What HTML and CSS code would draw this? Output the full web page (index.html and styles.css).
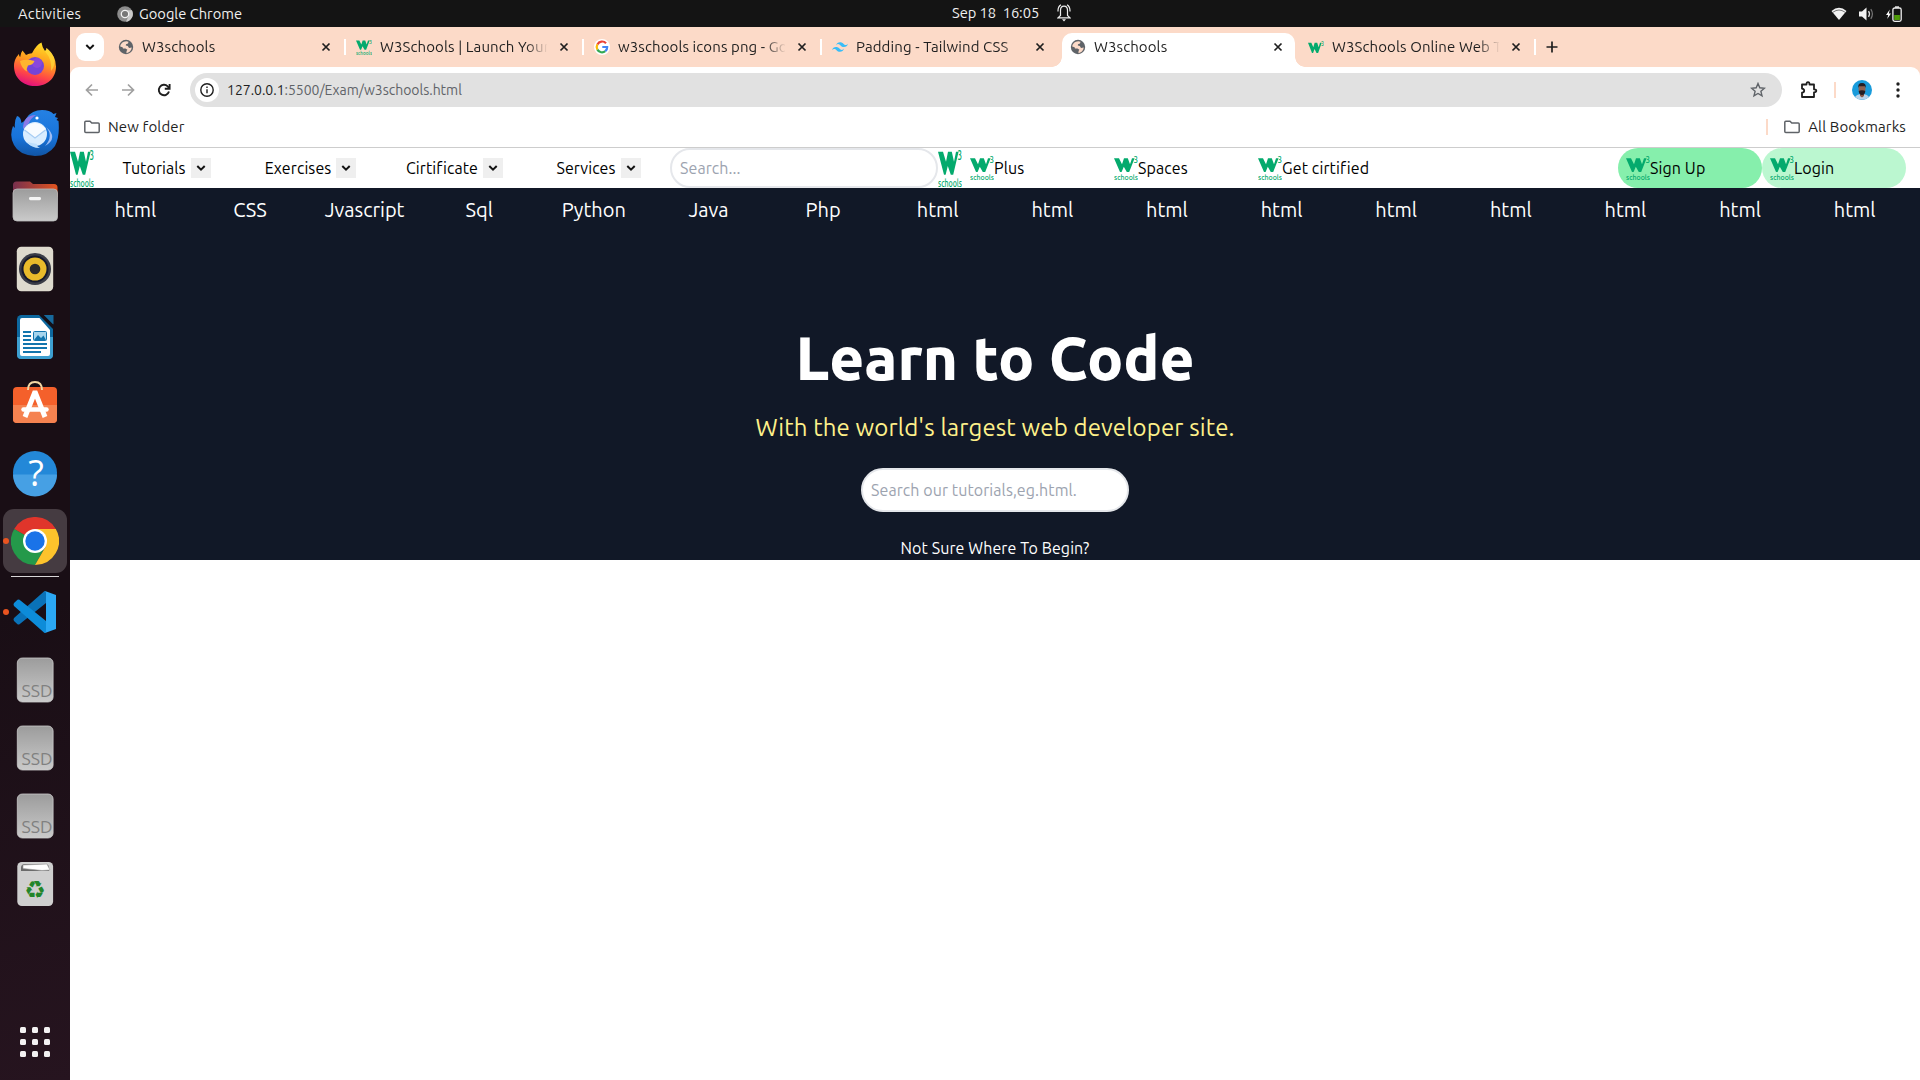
FILE: index.html
```html
<!DOCTYPE html>
<html lang="en">
<head>
<meta charset="utf-8">
<title>W3schools</title>
<link rel="stylesheet" href="styles.css">
</head>
<body>
<svg class="defs" width="0" height="0">
  <symbol id="w3" viewBox="0 0 24 24" preserveAspectRatio="none">
    <path fill="#04aa6d" d="M0 2.200h5l3 6 2-6h3.800l2.200 6 2-6h2.600L15.200 16h-2.400L9.800 10.800 7.600 16H6z"/>
    <text x="19.400" y="7" font-size="9" font-weight="500" textLength="4.500" lengthAdjust="spacingAndGlyphs" fill="#04aa6d">3</text>
    <text x="0" y="23.600" font-size="7" font-weight="500" textLength="24" lengthAdjust="spacingAndGlyphs" fill="#04aa6d">schools</text>
  </symbol>
  <symbol id="w3small" viewBox="0 0 24 16" preserveAspectRatio="none">
    <path fill="#04aa6d" d="M0 2.200h5l3 6 2-6h3.800l2.200 6 2-6h2.600L15.200 16h-2.400L9.800 10.800 7.600 16H6z"/>
    <text x="19.400" y="7" font-size="9" font-weight="500" textLength="4.500" lengthAdjust="spacingAndGlyphs" fill="#04aa6d">3</text>
  </symbol>
  <symbol id="globe" viewBox="0 0 16 16">
    <circle cx="8" cy="8" r="7.200" fill="#5f6368"/>
    <path class="land" d="M8.200 2.200 10.500 2.800 10 4.600 8 5.200 7.800 6.500 9.800 7 11 9 13.800 8.600C13.400 12 11 14 8.400 14.200L8.600 12 9.400 10.800 7.500 9.600 5 9.500 4.600 8.200 2.200 7.600C2.400 4.600 5 2.300 8.200 2.200z"/>
  </symbol>
  <symbol id="close" viewBox="0 0 10 10"><path d="M1.500 1.500l7 7m0-7l-7 7" stroke="#1f1f1f" stroke-width="1.700"/></symbol>
  <symbol id="down" viewBox="0 0 10 8"><path d="M1.300 2l3.700 3.600L8.700 2" fill="none" stroke="#111" stroke-width="2"/></symbol>
  <symbol id="folder" viewBox="0 0 16 14"><path d="M.8 2.200Q.8 1.200 1.800 1.200H6l1.800 1.800h6.400q1 0 1 1v7.600q0 1-1 1H1.800q-1 0-1-1z" fill="none" stroke="#5f6368" stroke-width="1.500"/></symbol>
  <symbol id="ssd" viewBox="0 0 48 48">
    <rect x="6.300" y="2" width="35.800" height="44" rx="5" fill="url(#grey)" stroke="#ccc" stroke-width=".8"/>
    <text x="10.500" y="41" font-size="17" textLength="31" lengthAdjust="spacingAndGlyphs" fill="#808080">SSD</text>
  </symbol>
  <linearGradient id="grey" x2="0" y2="1"><stop stop-color="#9c9c9c"/><stop offset="1" stop-color="#cacaca"/></linearGradient>
  <linearGradient id="fire" x1=".7" y1="0" x2=".4" y2="1"><stop stop-color="#ffe226"/><stop offset=".45" stop-color="#ff9a1f"/><stop offset=".75" stop-color="#ff4747"/><stop offset="1" stop-color="#e2117d"/></linearGradient>
  <linearGradient id="bird" x2="0" y2="1"><stop stop-color="#2581e3"/><stop offset=".6" stop-color="#1773da"/><stop offset="1" stop-color="#1155a5"/></linearGradient>
  <linearGradient id="files" x2="1" y2="0"><stop stop-color="#77304e"/><stop offset="1" stop-color="#e2541f"/></linearGradient>
</svg>

<header class="topbar">
  <div class="top-left">
    <span class="activities">Activities</span>
    <svg width="16" height="16" viewBox="0 0 16 16"><circle cx="8" cy="8" r="7.800" fill="#8c8c8c"/><path d="M8 4.200h7a8 8 0 0 1-6 11.600l2.500-5.500z" fill="#c9c9c9"/><circle cx="8" cy="8" r="3.700" fill="#777" stroke="#f2f2f2" stroke-width="1.300"/></svg>
    <span class="appname">Google Chrome</span>
  </div>
  <div class="clock">
    <span>Sep 18&nbsp; 16:05</span>
    <svg width="14" height="18" viewBox="0 0 14 18" fill="none" stroke="#eee" stroke-width="1.200"><path d="M3.500 11.500V6.500Q3.500 2.200 7 2.200t3.500 4.300v5l2.500 2.300H1zM1 7.500Q.8 2.600 4 .8M13 7.500Q13.200 2.600 10 .8"/><path d="M5 15.200h4L7 17.400z" fill="#eee" stroke="none"/></svg>
  </div>
  <div class="tray">
    <svg width="16" height="14" viewBox="0 0 16 14"><path d="M.5 4Q8-2.500 15.500 4L8 13z" fill="#f2f2f2"/><path d="M2 5.200Q8 .8 14 5.200" fill="none" stroke="#777" stroke-width="1"/></svg>
    <svg width="15" height="14" viewBox="0 0 15 14"><path d="M0 4.500h3L7.500.5v13L3 9.500H0z" fill="#f2f2f2"/><path d="M9.500 4.200q2 2.800 0 5.600" fill="none" stroke="#ddd" stroke-width="1.300"/><path d="M11.800 2.200q3.200 4.800 0 9.600" fill="none" stroke="#777" stroke-width="1.200"/></svg>
    <svg width="16" height="16" viewBox="0 0 16 16"><path d="M3.800 3.500 0 9h2.200L1.200 13 5 7.500H2.800z" fill="#fff"/><rect x="6.900" y="2" width="8.300" height="13.300" rx="1.800" fill="#141414" stroke="#eee" stroke-width="1.300"/><path d="M9 .3h4v1.500H9z" fill="#eee"/><path d="M8.200 9h5.700v5H8.200z" fill="#4e9a06"/></svg>
  </div>
</header>

<div class="desktop">
<aside class="dock">
  <div class="app"><svg viewBox="0 0 48 48">
    <path fill="url(#fire)" d="M11.500 9.500Q13.500 12 15 14q3-1.500 6-1.800Q25 4 30.500 1.500q.5 5 3.500 8.500 1.500-.5 1.500-3Q45 15 45 25.500C45 37.500 36 45 24 45S3 37 3 25c0-6 3-10 5-12 0 1.500.5 2.500 1.200 3Q9.500 12 11.500 9.500z"/>
    <circle cx="24" cy="25" r="9" fill="#7544d8"/><circle cx="26" cy="22" r="5" fill="#a04be0" opacity=".5"/>
    <path fill="#ffb52e" d="M9 20q6-2.500 14.500 0Q22 24 17 24.500q-2 3.500-1 6Q10 27 9 20z"/>
    <path fill="#ffdc3c" opacity=".7" d="M30.500 1.500Q31 7 36 13t4 17q5-6 3-13-2-6-7.500-10 0 2.500-1.500 3-3-3-3.500-8.500z"/>
  </svg></div>
  <div class="app"><svg viewBox="0 0 48 48">
    <path fill="url(#bird)" d="M6 7Q10 8 10.500 14q3-1.500 5-5Q21 1 31 1q8 0 11.500 4l3-1-1.500 4 3 1-1.500 2 2 1Q49 27 44 37 37 47 24 47 8 46 3 36-2 27 2 17l2 2Q3 12 6 7z"/>
    <path fill="#8a7ae8" d="M12 20Q12 6 25 6q-6 4-7 8z"/><circle cx="26" cy="9" r="1.600" fill="#fff"/>
    <path fill="#9dbcf3" d="M35 18q8 9-1 19 14-8 1-19z"/>
    <circle cx="24" cy="25" r="12" fill="#d9edff"/><path fill="#f7fbff" d="M13 20q11-12 22 0L24 29z"/><path d="M13.500 21 24 29l10.500-8" fill="none" stroke="#a7cdf3" stroke-width="1.200"/><path fill="#bfe0fd" d="M16 33q4 6 13 6-4-2-3-4z"/>
  </svg></div>
  <div class="app"><svg viewBox="0 0 48 48">
    <path fill="url(#files)" d="M2 14V8q0-3.500 3.500-3.500H19L22 7h21q3.500 0 3.500 3.500V20H2z"/>
    <rect x="2" y="12" width="44.500" height="32" rx="4" fill="url(#grey)" stroke="#bbb" stroke-width=".8"/><rect x="18" y="20" width="12" height="3.200" rx="1.400" fill="#f5f5f5"/>
  </svg></div>
  <div class="app"><svg viewBox="0 0 48 48">
    <rect x="5.800" y="1.800" width="36.400" height="44.400" rx="4.500" fill="#dedace"/><circle cx="24" cy="24" r="16" fill="#3a3c46"/><circle cx="24" cy="24" r="13.500" fill="#171a2c"/><circle cx="24" cy="24" r="11.500" fill="#e9bb2b"/><circle cx="24" cy="24" r="5.300" fill="#2b2b2b"/>
  </svg></div>
  <div class="app"><svg viewBox="0 0 48 48">
    <rect x="6" y="2" width="36" height="44" rx="4.500" fill="#0d689f"/><path fill="#3d9fd0" d="M6 24h36v18q0 4-4 4H10q-4 0-4-4z"/>
    <path fill="#fff" d="M11 5h17.500L39 17v24q0 2-2 2H11q-2 0-2-2V7q0-2 2-2z"/><path fill="#141018" d="M28 2h5l10 10v5z"/><path fill="#17699c" d="M33 2h9.500v9.500z"/>
    <path stroke="#1375ad" stroke-width="2" d="M12 19h8M12 23h8M12 27h8M12 31h24M12 35h24M12 39h18"/><rect x="22.500" y="18.500" width="13" height="9" rx="1" fill="#a7d5ed" stroke="#1375ad"/><path fill="#1375ad" d="m23 27 4-5 3 3 2.500-2.500L35 27z"/>
  </svg></div>
  <div class="app"><svg viewBox="0 0 48 48">
    <rect x="2" y="6" width="44" height="36" rx="4" fill="#f4602b"/><path fill="#f58250" d="M2 24h44v14q0 4-4 4H6q-4 0-4-4z"/>
    <path fill="none" stroke="#f4d8a4" stroke-width="1.900" d="M17 9Q17 1 24 1t7 8"/>
    <path fill="none" stroke="#fff" stroke-width="5" d="m14 36 9.500-24h1L34 36"/><path stroke="#fff" stroke-width="4.500" stroke-linecap="round" d="M12.500 28.500h23"/>
  </svg></div>
  <div class="app"><svg viewBox="0 0 48 48">
    <circle cx="24" cy="24" r="22" fill="#2388d8"/><path fill="#46a0e4" d="M2 25.500h44a22 22 0 0 1-44 0z"/>
    <text class="help" x="25" y="36.500" text-anchor="middle" font-size="36" fill="#fff">?</text>
  </svg></div>
  <div class="app active running"><svg viewBox="0 0 48 48">
    <path fill="#e0352b" d="M24 24 3.200 12a24 24 0 0 1 41.600 0z"/><path fill="#24994a" d="M24 24 3.200 12A24 24 0 0 0 24 48l10-18z"/><path fill="#fdc32c" d="M24 12h20.800A24 24 0 0 1 24 48l10.400-18z"/>
    <circle cx="24" cy="24" r="12" fill="#fff"/><circle cx="24" cy="24" r="9.700" fill="#1a73e8"/>
  </svg></div>
  <div class="divider"></div>
  <div class="app running"><svg viewBox="0 0 48 48">
    <path fill="#0a72b8" d="m3 33 3.500 3.200q1 .8 2 0L35 15V3.500L33.500 3 3 30q-1 1.500 0 3z"/><path fill="#0d8cd9" d="m3 15 3.500-3.200q1-.8 2 0L35 33v11.500l-1.500.5L3 18q-1-1.500 0-3z"/>
    <path fill="#2ba8f4" d="M34 3 45 7v34l-11 4q1-1 1-2V5q0-1-1-2z"/>
  </svg></div>
  <div class="app"><svg><use href="#ssd"/></svg></div>
  <div class="app"><svg><use href="#ssd"/></svg></div>
  <div class="app"><svg><use href="#ssd"/></svg></div>
  <div class="app"><svg viewBox="0 0 48 48">
    <rect x="6.300" y="2" width="35.800" height="44" rx="4.500" fill="#cfcfcf"/><path fill="#6b6b6b" d="M10 11V8q0-4 4-4h20q4 0 4 4v3z"/><path fill="#fff" stroke="#999" stroke-width=".6" d="m12 5 24-1 3 6-8 .5-19-2z"/>
    <text class="recycle" x="24" y="38" text-anchor="middle" font-size="24" fill="#23852a">♻</text>
  </svg></div>
  <div class="grid-button"><i></i><i></i><i></i><i></i><i></i><i></i><i></i><i></i><i></i></div>
</aside>

<main class="browser">
  <div class="tabs">
    <div class="tab-search"><svg width="10" height="8"><use href="#down"/></svg></div>
    <div class="tab"><svg class="fav"><use href="#globe"/></svg><span class="tab-title">W3schools</span><svg class="x"><use href="#close"/></svg></div>
    <div class="tab sep"><svg class="fav"><use href="#w3"/></svg><span class="tab-title">W3Schools | Launch Your own</span><svg class="x"><use href="#close"/></svg></div>
    <div class="tab sep"><svg class="fav" viewBox="0 0 16 16"><circle cx="8" cy="8" r="8" fill="#fff"/><g fill="none" stroke-width="2.200"><path stroke="#ea4335" d="M12 4.200A5.300 5.300 0 0 0 3.400 5.400"/><path stroke="#fbbc05" d="M3.400 5.400a5.300 5.300 0 0 0 0 5.200"/><path stroke="#34a853" d="M3.400 10.600a5.300 5.300 0 0 0 7.900 1.600"/><path stroke="#4285f4" d="M11.300 12.200Q13.300 10.500 13.200 8H8.300"/></g></svg><span class="tab-title">w3schools icons png - Google</span><svg class="x"><use href="#close"/></svg></div>
    <div class="tab sep"><svg class="fav" viewBox="0 0 16 16"><path fill="#38bdf8" d="M4 6.400Q5 3.200 8 3.200c3.200 0 3.600 2.400 5.200 2.800Q14.800 6.400 16 4.800 15 8 12 8C8.800 8 8.400 5.600 6.800 5.200Q5.200 4.800 4 6.400zM0 11.200Q1 8 4 8c3.200 0 3.600 2.400 5.200 2.800q1.600.4 2.800-1.200-1 3.200-4 3.200c-3.200 0-3.600-2.400-5.200-2.800Q1.200 9.600 0 11.200z"/></svg><span class="tab-title">Padding - Tailwind CSS</span><svg class="x"><use href="#close"/></svg></div>
    <div class="tab current"><svg class="fav"><use href="#globe"/></svg><span class="tab-title">W3schools</span><svg class="x"><use href="#close"/></svg></div>
    <div class="tab"><svg class="fav short"><use href="#w3small"/></svg><span class="tab-title">W3Schools Online Web Tutorials</span><svg class="x"><use href="#close"/></svg></div>
    <div class="new-tab"><svg width="12" height="12"><path d="M6 .5v11M.5 6h11" stroke="#1f1f1f" stroke-width="1.700"/></svg></div>
  </div>

  <div class="toolbar">
    <svg class="tool" viewBox="0 0 16 16" fill="none" stroke="#a0a0a0" stroke-width="1.700"><path d="M14 8H3M8 2.500 2.500 8 8 13.500"/></svg>
    <svg class="tool" viewBox="0 0 16 16" fill="none" stroke="#a0a0a0" stroke-width="1.700"><path d="M2 8h11M8 2.500 13.500 8 8 13.500"/></svg>
    <svg class="tool" viewBox="0 0 16 16" fill="none" stroke="#1f1f1f" stroke-width="1.900"><path d="M13 9.500A5.200 5.200 0 1 1 11.700 4.300l1.300 1.600"/><path d="M13.600 2v4.800H8.800"/></svg>
    <div class="address">
      <span class="info"><svg width="14" height="14" fill="none" stroke="#1f1f1f" stroke-width="1.400"><circle cx="7" cy="7" r="6.200"/><path d="M7 6.300v4M7 3.600v1.400"/></svg></span>
      <span class="url"><b>127.0.0.1</b>:5500/Exam/w3schools.html</span>
      <svg class="star" viewBox="0 0 16 16"><path d="m8 1.500 1.800 4.300 4.700.4-3.600 3.100 1.100 4.600L8 11.500l-4 2.400 1.100-4.600-3.600-3.100 4.700-.4z" fill="none" stroke="#5f6368" stroke-width="1.400"/></svg>
    </div>
    <svg class="ext" viewBox="0 0 18 18"><path d="M2 3.500h4.500Q6.500 1.200 8 1.200t1.500 2.300H14v4.800q2.300 0 2.300 1.500T14 11.300V16H2v-4.300q2.200-.3 2.200-2T2 7.700z" fill="none" stroke="#1f1f1f" stroke-width="1.800" stroke-linejoin="round"/></svg>
    <span class="bar"></span>
    <svg class="avatar" viewBox="0 0 20 20"><circle cx="10" cy="10" r="10" fill="#199bdb"/><path d="M3 17q2-3 7-3t7 3a10 10 0 0 1-14 0z" fill="#b8d3ea"/><path d="M8 12h4v4l-2 1.500L8 16z" fill="#875846"/><ellipse cx="10" cy="9" rx="3.500" ry="5" fill="#8f6251"/><path d="M6.300 8Q5.600 3 10 3t3.700 5l-.8-1.800H7.100zM6.700 11q1-.8 3.300-.8t3.300.8Q13 15 10 15t-3.300-4z" fill="#251e24"/></svg>
    <svg class="dots" viewBox="0 0 4 16" fill="#1f1f1f"><circle cx="2" cy="2" r="1.700"/><circle cx="2" cy="8" r="1.700"/><circle cx="2" cy="14" r="1.700"/></svg>
  </div>

  <div class="bookmarks">
    <svg width="16" height="14"><use href="#folder"/></svg><span>New folder</span>
    <i class="bar end"></i>
    <svg width="16" height="14"><use href="#folder"/></svg><span>All Bookmarks</span>
  </div>

  <section class="page">
    <nav class="main-nav">
      <svg class="logo"><use href="#w3"/></svg>
      <div class="menu">Tutorials <span class="caret"><svg width="10" height="8"><use href="#down"/></svg></span></div>
      <div class="menu">Exercises <span class="caret"><svg width="10" height="8"><use href="#down"/></svg></span></div>
      <div class="menu">Cirtificate <span class="caret"><svg width="10" height="8"><use href="#down"/></svg></span></div>
      <div class="menu">Services <span class="caret"><svg width="10" height="8"><use href="#down"/></svg></span></div>
      <input class="nav-search" type="text" placeholder="Search...">
      <svg class="logo"><use href="#w3"/></svg>
      <a class="link"><svg><use href="#w3"/></svg><span>Plus</span></a>
      <a class="link"><svg><use href="#w3"/></svg><span>Spaces</span></a>
      <a class="link"><svg><use href="#w3"/></svg><span>Get cirtified</span></a>
      <a class="link signup"><svg><use href="#w3"/></svg><span>Sign Up</span></a>
      <a class="link login"><svg><use href="#w3"/></svg><span>Login</span></a>
    </nav>
    <div class="dark">
      <ul class="topics"><li>html</li><li>CSS</li><li>Jvascript</li><li>Sql</li><li>Python</li><li>Java</li><li>Php</li><li>html</li><li>html</li><li>html</li><li>html</li><li>html</li><li>html</li><li>html</li><li>html</li><li>html</li></ul>
      <div class="hero">
        <h1>Learn to Code</h1>
        <p class="tagline">With the world's largest web developer site.</p>
        <input class="hero-search" type="text" placeholder="Search our tutorials,eg.html.">
        <p class="begin">Not Sure Where To Begin?</p>
      </div>
    </div>
  </section>
</main>
</div>
</body>
</html>
```
FILE: styles.css
```css
* { box-sizing: border-box; }
body {
  margin: 0;
  width: 1920px;
  height: 1080px;
  overflow: hidden;
  display: flex;
  flex-direction: column;
  font-family: Ubuntu, "Noto Sans", sans-serif;
  font-size: 15px;
  color: #1f1f1f;
  background: #fff;
}
svg { display: block; flex: none; }
.defs { position: absolute; }
h1, p, ul { margin: 0; padding: 0; }

/* System bar */
.topbar {
  height: 27px;
  flex: none;
  background: #141414;
  color: #f0f0f0;
  display: grid;
  grid-template-columns: 952px 1fr auto;
  align-items: center;
  font-size: 14.7px;
  line-height: 26px;
}
.top-left { display: flex; align-items: center; padding-left: 18px; }
.activities { width: 99px; letter-spacing: .3px; }
.appname { margin-left: 6px; }
.clock { display: flex; align-items: center; gap: 17px; padding-bottom: 1px; }
.clock span { width: 88px; white-space: nowrap; letter-spacing: -.05px; }
.tray { display: flex; align-items: center; gap: 12px; padding-right: 18px; }

.desktop { flex: 1; display: flex; min-height: 0; }

/* Dock */
.dock {
  width: 70px;
  flex: none;
  display: flex;
  flex-direction: column;
  align-items: center;
  padding-top: 4px;
  background: linear-gradient(165deg, #190e15 55%, #26141f);
}
.app {
  position: relative;
  width: 64px;
  height: 64px;
  margin: 2px 0;
  flex: none;
  display: flex;
  align-items: center;
  justify-content: center;
  border-radius: 11px;
}
.app svg { width: 48px; height: 48px; }
.app.active { background: #453b41; }
.running::before {
  content: "";
  position: absolute;
  left: 0;
  width: 6px;
  height: 6px;
  border-radius: 50%;
  background: #e95420;
}
.divider { width: 48px; height: 1px; margin: 1px 0; background: #d8d5d7; flex: none; }
.help { font-family: "Open Sans", sans-serif; }
.recycle { font-family: "DejaVu Sans", sans-serif; }
.grid-button {
  margin: auto 0 23px;
  display: grid;
  grid-template-columns: repeat(3, 6px);
  gap: 6px;
}
.grid-button i { height: 6px; border-radius: 1.5px; background: #f3f1f2; }

/* Browser chrome */
.browser { flex: 1; min-width: 0; background: #fcdac8; }
.tabs { height: 40px; display: flex; align-items: center; padding-left: 6px; }
.tab-search {
  width: 28px;
  height: 28px;
  margin-right: 5px;
  border-radius: 9px;
  background: #fff;
  display: flex;
  align-items: center;
  justify-content: center;
}
.tab { width: 238px; height: 28px; display: flex; align-items: center; padding: 0 16px 0 9px; position: relative; }
.fav { width: 16px; height: 16px; }
.fav.short { height: 12px; }
.land { fill: #fcdac8; }
.tab-title {
  width: 167px;
  margin: 0 7px 0 8px;
  padding-bottom: 1px;
  overflow: hidden;
  white-space: nowrap;
  line-height: 24px;
  letter-spacing: .1px;
  -webkit-mask-image: linear-gradient(90deg, #000 146px, transparent 168px);
  mask-image: linear-gradient(90deg, #000 146px, transparent 168px);
}
.x { width: 10px; height: 10px; margin-left: 5px; }
.sep::before { content: ""; position: absolute; left: -3px; width: 2px; height: 16px; background: #fff; }
.current { height: 34px; margin-top: 6px; padding-bottom: 6px; }
.current > * { position: relative; }
.current .land { fill: #fff; }
.current::before {
  content: "";
  position: absolute;
  left: 1px;
  right: 4px;
  top: 0;
  bottom: 0;
  border-radius: 10px 10px 0 0;
  background: #fff;
}
.current::after {
  content: "";
  position: absolute;
  left: -9px;
  right: -6px;
  bottom: 0;
  height: 10px;
  background:
    radial-gradient(circle at 0 0, transparent 9.5px, #fff 10px) left / 10px 10px no-repeat,
    radial-gradient(circle at 100% 0, transparent 9.5px, #fff 10px) right / 10px 10px no-repeat;
}
.new-tab { border-left: 2px solid #fff; height: 16px; margin-left: -3px; padding: 2px 0 0 10px; }

.toolbar {
  height: 40px;
  padding: 6px 20px 0 14px;
  display: flex;
  align-items: center;
  background: #fff;
  border-radius: 9px 9px 0 0;
}
.tool { width: 16px; height: 16px; margin-right: 20px; }
.address {
  width: 1592px;
  height: 34px;
  margin-left: -2px;
  padding: 0 16px 0 5px;
  display: flex;
  align-items: center;
  border-radius: 17px;
  background: #e1e1e1;
}
.info { width: 24px; height: 24px; border-radius: 50%; background: #fff; display: flex; align-items: center; justify-content: center; }
.url { margin-left: 8px; font-size: 14px; letter-spacing: -.02px; color: #5f6368; flex: 1; }
.url b { font-weight: 400; color: #1f1f1f; }
.star { width: 16px; height: 16px; }
.ext { width: 18px; height: 18px; margin-left: 18px; }
.bar { width: 2px; height: 16px; background: #fcdac8; }
.toolbar .bar { margin: 0 16px; }
.avatar { width: 20px; height: 20px; margin-right: 24px; }
.dots { width: 4px; height: 16px; }

.bookmarks {
  height: 41px;
  display: flex;
  align-items: center;
  gap: 8px;
  padding: 0 14px;
  background: #fff;
  border-bottom: 1px solid #cdcdcd;
}
.bookmarks span { padding-bottom: 2px; letter-spacing: .13px; }
.bar.end { margin: 0 8px 0 auto; }

/* Web page */
.page { height: 932px; background: #fff; color: #000; font-size: 16px; line-height: 24px; }
.main-nav { height: 40px; display: flex; align-items: center; padding-right: 14px; }
.logo { width: 24px; height: 40px; }
.menu { width: 144px; padding: 0 0 1px 1px; display: flex; align-items: center; justify-content: center; gap: 5px; letter-spacing: .08px; }
.caret { width: 20px; height: 20px; background: #efefef; display: flex; align-items: center; justify-content: center; }
input { font: inherit; letter-spacing: .08px; border: 2px solid #e5e7eb; background: #fff; outline: 0; }
input::placeholder { color: #9ca3af; }
.nav-search { width: 268px; height: 40px; padding: 0 8px 1px; border-radius: 20px; }
.link { width: 144px; height: 40px; padding-left: 8px; display: flex; align-items: center; }
.link svg { width: 24px; height: 24px; }
.link span { padding-bottom: 1px; letter-spacing: .12px; }
.signup { margin-left: auto; border-radius: 20px; background: #86efac; }
.login { border-radius: 20px; background: #bbf7d0; }
.dark { height: 372px; background: #111827; color: #fff; }
.topics {
  list-style: none;
  display: grid;
  grid-template-columns: repeat(16, 1fr);
  padding: 8px;
  font-size: 20px;
  line-height: 28px;
  text-align: center;
}
.hero { display: flex; flex-direction: column; align-items: center; padding-top: 96px; }
h1 { font-size: 60px; line-height: 60px; font-weight: 800; }
.tagline { margin-top: 22px; font-size: 24px; line-height: 36px; letter-spacing: .13px; color: #fef08a; }
.hero-search { width: 268px; height: 44px; margin-top: 22px; padding: 0 8px 1px; border-radius: 22px; }
.begin { margin-top: 24px; letter-spacing: .1px; }
```
